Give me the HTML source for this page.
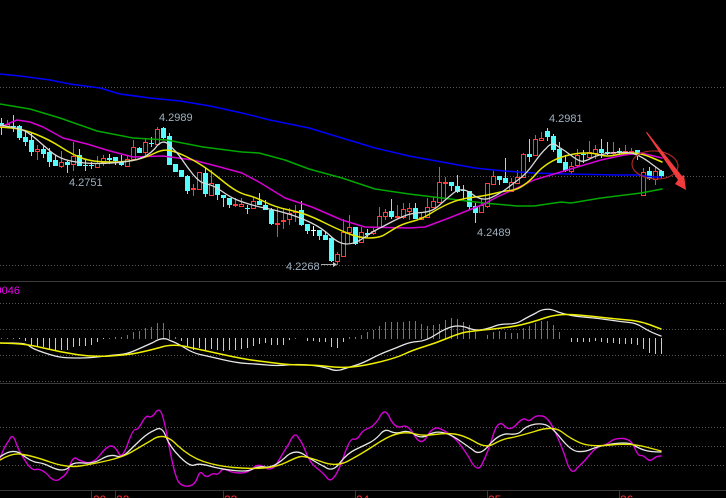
<!DOCTYPE html>
<html><head><meta charset="utf-8"><style>
html,body{margin:0;padding:0;background:#000;width:726px;height:498px;overflow:hidden}
svg{display:block;position:absolute;left:0;top:0}
text{font-family:"Liberation Sans",sans-serif}
.m{fill:none;stroke-linejoin:round;stroke-linecap:round}
</style></head><body>
<svg width="726" height="498" viewBox="0 0 726 498">
<rect width="726" height="498" fill="#000"/>
<g stroke="#555" stroke-dasharray="1 2" fill="none">
<path d="M0 87.5H726M0 176.5H726M0 265.5H726M0 303.5H726M0 329.5H726M0 355.5H726M0 381.5H726M0 427.5H726M0 446.5H726M0 465.5H726"/>
</g>
<path d="M0 281.5H726M0 383.5H726M0 490.5H726M91.5 490V498M115.5 490V498M223.5 490V498M355.5 490V498M487.5 490V498M619.5 490V498" stroke="#3a3a3a" fill="none"/>

<!-- red wicks -->
<path fill="none" stroke="#ff3c3c" d="M7.5 120V128M37.5 145V160M61.5 151V168M73.5 142V171M97.5 156V167M103.5 155V166M127.5 155V167M133.5 140V160M145.5 139V155M157.5 127V145M193.5 184V196M199.5 172V189M211.5 170V196M235.5 198V207M241.5 198V207M253.5 197V208M277.5 208V237M283.5 209V229M289.5 208V225M295.5 205V222M337.5 252V265M343.5 219V257M349.5 215V243M361.5 227V243M373.5 228V235M379.5 207V228M385.5 209V220M397.5 205V218M403.5 203V219M409.5 203V220M421.5 212V220M427.5 198V218M433.5 197V208M439.5 167V202M445.5 177V200M481.5 199V213M487.5 183V208M493.5 171V185M511.5 178V192M517.5 170V183M523.5 153V177M535.5 135V155M541.5 132V141M571.5 162V174M577.5 149V167M589.5 141V157M595.5 145V159M613.5 142V155M625.5 145V155M631.5 148V154M643.5 168V195M655.5 167V185"/>
<!-- red bodies -->
<path fill="#000" stroke="#ff3c3c" d="M5.5 124.5h4V126.5h-4zM35.5 149.5h4V151.5h-4zM59.5 162.5h4V166.5h-4zM71.5 156.5h4V164.5h-4zM95.5 163.5h4V167.5h-4zM101.5 158.5h4V162.5h-4zM125.5 159.5h4V166.5h-4zM131.5 147.5h4V159.5h-4zM143.5 142.5h4V152.5h-4zM155.5 129.5h4V144.5h-4zM191.5 188.5h4V189.5h-4zM197.5 172.5h4V189.5h-4zM209.5 183.5h4V195.5h-4zM233.5 204.5h4V205.5h-4zM239.5 204.5h4V206.5h-4zM251.5 201.5h4V208.5h-4zM275.5 223.5h4V224.5h-4zM281.5 220.5h4V221.5h-4zM287.5 213.5h4V219.5h-4zM293.5 211.5h4V212.5h-4zM335.5 254.5h4V261.5h-4zM341.5 232.5h4V256.5h-4zM347.5 227.5h4V232.5h-4zM359.5 232.5h4V242.5h-4zM371.5 231.5h4V233.5h-4zM377.5 216.5h4V227.5h-4zM383.5 212.5h4V216.5h-4zM395.5 216.5h4V217.5h-4zM401.5 209.5h4V217.5h-4zM407.5 208.5h4V211.5h-4zM419.5 217.5h4V219.5h-4zM425.5 207.5h4V217.5h-4zM431.5 201.5h4V207.5h-4zM437.5 182.5h4V202.5h-4zM443.5 182.5h4V183.5h-4zM479.5 205.5h4V212.5h-4zM485.5 183.5h4V206.5h-4zM491.5 176.5h4V184.5h-4zM509.5 182.5h4V191.5h-4zM515.5 177.5h4V183.5h-4zM521.5 154.5h4V177.5h-4zM533.5 139.5h4V155.5h-4zM539.5 138.5h4V140.5h-4zM569.5 166.5h4V171.5h-4zM575.5 155.5h4V165.5h-4zM587.5 152.5h4V157.5h-4zM593.5 149.5h4V153.5h-4zM611.5 152.5h4V153.5h-4zM623.5 151.5h4V152.5h-4zM629.5 151.5h4V152.5h-4zM641.5 172.5h4V195.5h-4zM653.5 171.5h4V179.5h-4z"/>
<!-- cyan wicks -->
<path fill="none" stroke="#54fcfc" d="M1.5 118V135M13.5 115V132M19.5 125V140M25.5 131V146M31.5 133V156M43.5 146V158M49.5 148V167M55.5 155V166M67.5 160V173M79.5 149V166M85.5 160V171M91.5 162V169M109.5 154V164M115.5 157V165M121.5 155V166M139.5 147V153M151.5 137V147M163.5 127V139M169.5 133V165M175.5 164V172M181.5 170V177M187.5 175V194M205.5 168V197M217.5 184V200M223.5 195V207M229.5 198V208M247.5 205V214M259.5 193V205M265.5 200V210M271.5 208V225M301.5 201V226M307.5 224V234M319.5 230V240M325.5 232V240M331.5 237V262M355.5 227V245M367.5 229V237M391.5 199V219M415.5 203V219M451.5 182V191M457.5 175V193M463.5 185V200M469.5 191V210M475.5 203V223M499.5 176V185M505.5 158V183M529.5 139V162M547.5 128V141M553.5 134V152M559.5 142V163M565.5 155V172M583.5 150V163M601.5 139V158M607.5 142V155M619.5 148V155M637.5 150V160M649.5 167V180M661.5 170V178"/>
<path fill="none" stroke="#fff" d="M313.5 226V236"/>
<path fill="#fff" d="M311 230h5v1h-5z"/>
<!-- cyan bodies -->
<path fill="#54fcfc" d="M-1 123h5V126h-5zM11 126h5V127h-5zM17 126h5V138h-5zM23 137h5V142h-5zM29 140h5V152h-5zM41 149h5V154h-5zM47 152h5V162h-5zM53 160h5V166h-5zM65 162h5V165h-5zM77 155h5V166h-5zM83 165h5V166h-5zM89 165h5V166h-5zM107 158h5V160h-5zM113 157h5V161h-5zM119 162h5V165h-5zM137 148h5V153h-5zM149 143h5V144h-5zM161 128h5V138h-5zM167 136h5V165h-5zM173 164h5V172h-5zM179 170h5V177h-5zM185 176h5V191h-5zM203 173h5V194h-5zM215 184h5V195h-5zM221 195h5V198h-5zM227 198h5V205h-5zM245 208h5V209h-5zM257 201h5V205h-5zM263 205h5V210h-5zM269 210h5V224h-5zM299 210h5V225h-5zM305 224h5V231h-5zM317 230h5V236h-5zM323 235h5V240h-5zM329 238h5V261h-5zM353 227h5V244h-5zM365 233h5V235h-5zM389 211h5V217h-5zM413 208h5V219h-5zM449 182h5V186h-5zM455 186h5V192h-5zM461 190h5V191h-5zM467 191h5V207h-5zM473 206h5V213h-5zM497 176h5V180h-5zM503 178h5V183h-5zM527 154h5V157h-5zM545 131h5V137h-5zM551 136h5V150h-5zM557 149h5V163h-5zM563 162h5V171h-5zM581 154h5V155h-5zM599 149h5V153h-5zM605 152h5V153h-5zM617 151h5V153h-5zM635 150h5V155h-5zM647 171h5V179h-5zM659 171h5V176h-5z"/>

<!-- MAs -->
<polyline class="m" stroke="#0000ff" stroke-width="1.5" points="0,74 20,76 50,80 70,84 100,88 120,94 150,98 180,101 210,106 242,113 270,120 309,128 342,138 375,148 409,156 442,162 475,168 484,169 504,171 534,173 567,174 617,175 637,175 654,177 661,177"/>
<polyline class="m" stroke="#00a800" stroke-width="1.5" points="0,104 30,109 60,118 97,131 133,138 167,140 203,147 242,152 259,153 285,160 309,169 342,178 375,189 409,194 442,198 484,203 517,206 534,206 561,202 571,203 601,198 641,193 662,189"/>
<polyline class="m" stroke="#d400d4" stroke-width="1.5" points="0,127 17,120 30,122 43,127 63,138 87,144 110,151 133,157 163,156 193,160 220,167 242,173 259,182 285,198 312,207 342,220 365,227 409,228 425,227 449,218 469,210 484,204 497,197 517,188 534,180 554,174 574,168 601,160 624,155 641,153 662,158"/>
<path class="m" stroke="#e6e600" stroke-width="1.5" d="M0,127 L11.5,128 Q23,129 36.5,134.5 Q50,140 61.5,147.5 Q73,155 83,158.5 Q93,162 110,162 Q127,162 137,159.5 Q147,157 155,153 Q163,149 170,150.5 Q177,152 187,157 Q197,162 205,167.5 Q213,173 221.5,180 Q230,187 236,190.5 Q242,194 248.5,195.5 Q255,197 265,202 Q275,207 287,209.5 Q299,212 307,215 Q315,218 325,223 Q335,228 347,233 Q359,238 369,238 Q379,238 384,235 Q389,232 395.5,228 Q402,224 412,221.5 Q422,219 430.5,213.5 Q439,208 449,203.5 Q459,199 471.5,197.5 Q484,196 494,193.5 Q504,191 510.5,190.5 Q517,190 524,185 Q531,180 536,174 Q541,168 549,163 Q557,158 567,155.5 Q577,153 585.5,153 Q594,153 600.5,155 Q607,157 615.5,155 Q624,153 632.5,153 Q641,153 651.5,157.5 L662,162"/>
<path class="m" stroke="#d8d8d8" stroke-width="1.3" d="M0,125 L8.5,126.5 Q17,128 22.5,130 Q28,132 35.5,138.5 Q43,145 50,151 Q57,157 65,159.5 Q73,162 85,163 Q97,164 112,163 Q127,162 137,159.5 Q147,157 155,148.5 Q163,137 170,146 Q177,152 182,159.5 Q187,167 193.5,175 Q200,183 206.5,184 Q213,185 221.5,191 Q230,197 236,199.5 Q242,202 250.5,204.5 Q259,207 267,208.5 Q275,210 287,213.5 Q299,217 310.5,222.5 Q322,228 330.5,236 Q339,244 347,244 Q355,244 363.5,238 Q372,232 377,229.5 Q382,227 390.5,222.5 Q399,218 405.5,215.5 Q412,213 422,212.5 Q432,212 438.5,206 Q445,200 453.5,193 Q462,186 472,194 Q482,202 491.5,197.5 Q501,193 507.5,188 Q514,183 520.5,178 Q527,173 534,163 Q541,153 546.5,148 Q552,141 558,146.5 Q564,150 570.5,155 Q577,160 580.5,161 Q584,162 590.5,158.5 Q597,155 607,153.5 Q617,152 627,152.5 Q637,153 649,162 L661,171"/>

<!-- circle and arrow -->
<ellipse cx="655" cy="165" rx="23" ry="14" transform="rotate(4 655 165)" fill="none" stroke="#a82626" stroke-width="1.2"/>
<polygon fill="#f03c3c" points="647,132 682,176 684,175 686,190 675,184 678,180 646,132.5"/>

<!-- MACD bars -->
<path fill="none" stroke="#ff3c3c" d="M1.5 338v1M7.5 338v1M13.5 338v1M109.5 338v1M115.5 337v2M121.5 337v2M127.5 335v4M133.5 332v7M139.5 331v8M145.5 328v11M151.5 327v12M157.5 323v16M163.5 323v16M169.5 330v9M175.5 337v2M295.5 338v1M349.5 337v2M355.5 337v2M361.5 335v4M367.5 332v7M373.5 330v9M379.5 326v13M385.5 322v17M391.5 322v17M397.5 322v17M403.5 322v17M409.5 321v18M415.5 321v18M421.5 324v15M427.5 326v13M433.5 325v14M439.5 324v15M445.5 320v19M451.5 318v21M457.5 319v20M463.5 322v17M469.5 325v14M475.5 332v7M487.5 335v4M493.5 332v7M499.5 331v8M505.5 332v7M511.5 333v6M517.5 333v6M523.5 328v11M529.5 326v13M535.5 323v16M541.5 321v18M547.5 321v18M553.5 325v14M559.5 332v7"/>
<path fill="none" stroke="#54fcfc" d="M19.5 338v1M25.5 338v3M31.5 338v7M37.5 338v8M43.5 338v9M49.5 338v12M55.5 338v13M61.5 338v12M67.5 338v12M73.5 338v9M79.5 338v8M85.5 338v8M91.5 338v7M97.5 338v4M103.5 338v1M181.5 338v3M187.5 338v8M193.5 338v12M199.5 338v10M205.5 338v12M211.5 338v11M217.5 338v12M223.5 338v13M229.5 338v12M235.5 338v12M241.5 338v11M247.5 338v10M253.5 338v8M259.5 338v6M265.5 338v5M271.5 338v7M277.5 338v7M283.5 338v7M289.5 338v2M307.5 338v3M313.5 338v3M319.5 338v4M325.5 338v4M331.5 338v9M337.5 338v10M343.5 338v4M571.5 338v4M577.5 338v4M583.5 338v4M589.5 338v4M595.5 338v3M601.5 338v4M607.5 338v5M613.5 338v5M619.5 338v6M625.5 338v6M631.5 338v6M637.5 338v7M643.5 338v11M649.5 338v15M655.5 338v16M661.5 338v16"/>
<path class="m" stroke="#e6e6e6" stroke-width="1.3" d="M0,343 L13,343 L22,343.5 Q27,344 30,346.5 Q33,349 45,353 Q57,357 63.5,357.5 Q70,358 80,358 Q90,358 101.5,356.5 Q113,355 120,354.5 Q127,354 135,350.5 Q143,347 153,342.5 Q163,336 170,340.5 Q177,343 185,348 Q193,353 200,354.5 Q207,356 222,359.5 Q237,363 247,363.5 Q257,364 267,365 Q277,366 287,365 Q297,364 308.5,365 Q320,366 328.5,368.5 Q337,372 343.5,369 Q350,367 356.5,365 Q363,363 371.5,358.5 Q380,354 388,351 Q396,348 403,345 Q410,342 418,341.5 Q426,341 436,334.5 Q446,328 453,326.5 Q460,325 468,328 Q476,331 483,329.5 Q490,328 495,326 Q500,324 508,324 Q516,324 521,321 Q526,318 536,313 Q546,306 558,312 Q570,316 583,317 Q596,318 609.5,320 Q623,322 629.5,322.5 Q636,323 643,327.5 Q650,332 661,336"/>
<path class="m" stroke="#f0f000" stroke-width="1.5" d="M0,343 L13.5,343.5 Q27,344 43.5,348 Q60,352 76.5,354.5 Q93,357 110,356 Q127,355 137,353 Q147,351 160,347.5 Q173,343 190,347.5 Q207,351 225,355 Q243,359 255,360.5 Q267,362 278.5,363.5 Q290,365 303.5,365 Q317,365 328.5,366.5 Q340,368 351.5,367 Q363,366 379.5,362 Q396,358 404.5,354 Q413,350 424.5,346.5 Q436,343 448,338 Q460,333 466.5,332 Q473,331 493,329 Q513,327 524.5,324 Q536,321 543,318.5 Q550,316 558,315 Q566,314 578,315 Q590,316 603,317.5 Q616,319 628,320 Q640,321 650.5,325 L661,329"/>

<!-- KDJ -->
<path class="m" stroke="#d400d4" stroke-width="1.4" d="M0,458 Q5,445 9,440.5 Q13,431 16.5,444.5 Q20,453 26,462 Q32,471 36,469.5 Q40,468 47.5,474.5 Q55,484 61,478 Q67,475 70,465.5 Q73,456 76.5,458.5 Q80,461 86.5,462.5 Q93,464 100,455 Q107,446 111,446 Q115,446 118.5,453 Q122,460 127.5,444.5 Q133,429 135.5,429.5 Q138,430 142,422.5 Q146,415 148.5,416.5 Q151,418 154.5,414 Q158,408 160.5,411.5 Q163,413 169,445.5 Q175,478 179,482.5 Q183,487 189,486 Q195,485 197.5,477.5 Q200,470 203,474 Q206,478 209.5,475.5 Q213,473 215.5,474 Q218,475 220.5,471.5 Q223,468 228,470.5 Q233,473 240.5,473 Q248,473 253,468 Q258,463 265,467.5 Q272,472 277.5,462.5 Q283,453 289,443.5 Q295,430 298.5,438 Q302,442 306,452.5 Q310,463 316,467.5 Q322,472 326,476.5 Q330,483 334,477 Q338,473 344,455.5 Q350,438 353.5,439 Q357,440 360,435 Q363,430 368,428.5 Q373,427 379,418.5 Q385,405 390.5,419.5 Q396,429 402,426.5 Q408,424 414.5,435.5 Q421,447 427,436.5 Q433,426 439.5,428.5 Q446,431 453,437 Q460,443 469,457.5 Q478,476 483,462 Q488,452 493,435.5 Q498,419 504,425.5 Q510,432 516.5,424.5 Q523,417 526,419.5 Q529,422 532.5,418.5 Q536,415 542,416 Q548,417 554,429.5 Q560,442 565.5,457.5 Q571,478 577,468 Q583,463 589.5,455 Q596,447 601,446 Q606,445 610.5,441.5 Q615,438 623,438.5 Q631,439 634.5,447.5 Q638,456 640.5,455.5 Q643,455 646.5,458.5 Q650,462 653,459 Q656,456 661,456"/>
<path class="m" stroke="#e6e6e6" stroke-width="1.3" d="M0,457 Q13,447 22.5,455 Q32,462 37.5,462.5 Q43,463 50,466.5 Q57,470 62,470 Q67,470 70,466 Q73,462 83,463 Q93,464 101.5,459 Q110,454 116,456 Q122,458 128.5,451.5 Q135,445 141.5,439 Q148,433 155,430 Q162,425 166,437 Q170,447 180,457 Q190,467 194.5,465 Q199,463 209.5,466 Q220,469 234,470.5 Q248,472 253,469 Q258,466 265.5,467 Q273,468 284,458.5 Q295,447 306,456 Q317,463 325,467 Q333,473 340.5,462 Q348,453 355.5,449.5 Q363,446 369,443 Q375,440 380,434.5 Q385,428 390.5,431.5 Q396,434 402,432 Q408,430 414.5,434.5 Q421,439 428,435 Q435,431 442.5,432.5 Q450,434 458,439.5 Q466,445 473,450 Q480,457 490,444 Q500,433 509,434 Q518,435 521.5,431 Q525,427 531.5,425 Q538,423 544.5,424.5 Q551,426 561,438.5 Q571,451 578,451.5 Q585,452 590.5,449.5 Q596,447 606,445 Q616,443 623.5,443 Q631,443 634.5,445.5 Q638,448 644,450 Q650,452 661,452"/>
<path class="m" stroke="#e6e600" stroke-width="1.4" d="M0,460 Q13,452 23,454.5 Q33,456 50,462 Q67,468 80,466 Q93,464 108,460.5 Q123,457 131.5,452 Q140,447 152,440 Q164,431 177,445 Q190,457 203.5,461.5 Q217,466 233.5,467.5 Q250,469 263.5,468 Q277,467 287,462 Q297,457 301,456.5 Q305,456 321,461.5 Q337,468 350,460 Q363,453 376.5,444 Q390,435 399,433.5 Q408,432 415.5,434 Q423,436 434.5,434.5 Q446,433 454.5,434 Q463,435 474.5,441.5 Q486,449 494.5,443.5 Q503,439 509.5,438 Q516,437 534.5,431.5 Q553,425 562,432 Q571,439 580.5,443 Q590,447 610.5,445 Q631,443 646,447 L661,451"/>

<!-- labels -->
<g font-size="11" fill="#9fb0c0">
<text x="159" y="121">4.2989</text>
<text x="69" y="186">4.2751</text>
<text x="286" y="270">4.2268</text>
<text x="477" y="236">4.2489</text>
<text x="549" y="122">4.2981</text>
</g>
<path d="M321 264.5H334" stroke="#aaa" fill="none"/><path d="M333 262l4 2.5-4 2.5z" fill="#ccc"/>
<text x="-4.5" y="294" font-size="11" fill="#f000f0">0046</text>
<g font-size="12" fill="#ff3030">
<text x="93" y="504">20</text>
<text x="116" y="504">22</text>
<text x="224" y="504">23</text>
<text x="356" y="504">24</text>
<text x="488" y="504">25</text>
<text x="620" y="504">26</text>
</g>
</svg>
</body></html>
